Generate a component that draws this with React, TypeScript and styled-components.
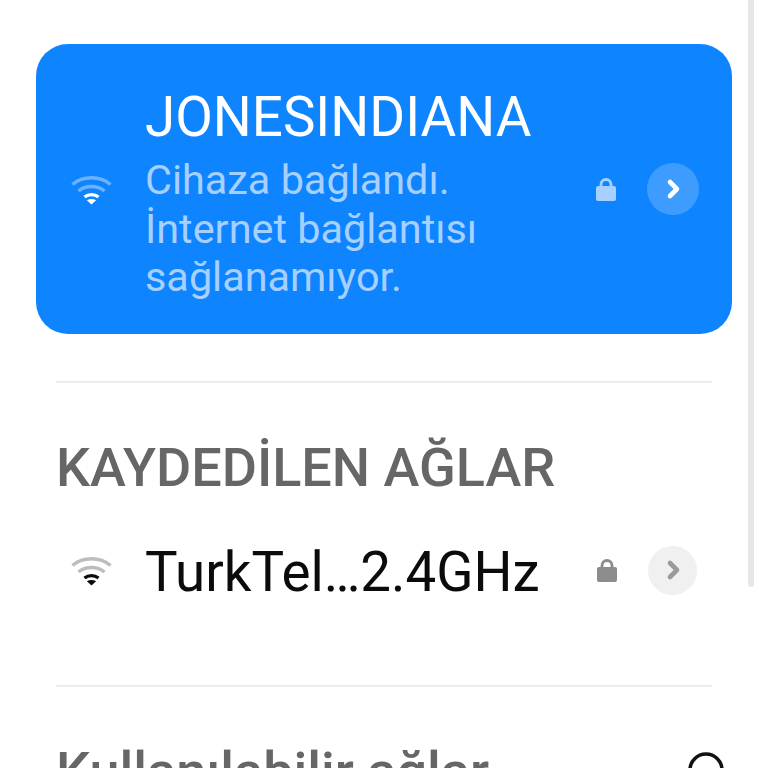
import styled, { createGlobalStyle } from "styled-components";

const GlobalStyle = createGlobalStyle`
  html, body {
    margin: 0;
    height: 768px;
    overflow: hidden;
    background-color: #ffffff;
  }
  body {
    font-family: Roboto, "Noto Sans", sans-serif;
  }
`;

const Page = styled.div`
  position: relative;
  width: 768px;
  height: 768px;
  overflow: hidden;
  box-sizing: border-box;
  padding-top: 44px;
`;
const ScrollThumb = styled.div`
  position: absolute;
  top: 0;
  left: 748px;
  width: 6px;
  height: 587px;
  background-color: #e6e6e6;
  border-radius: 0 0 3px 3px;
`;
const ActiveCard = styled.div`
  display: flex;
  align-items: center;
  height: 290px;
  margin: 0 36px;
  padding: 0 33px 0 34px;
  box-sizing: border-box;
  background-color: #0f84ff;
  border-radius: 32px;
`;
const Row = styled.div`
  display: flex;
  align-items: center;
  height: 100px;
  padding: 0 70px 0 70px;
  margin-top: 23px;
`;
const IconSlot = styled.div`
  flex: none;
  width: 42px;
  height: 32px;
  margin-right: 33px;
`;
const Texts = styled.div<{ $top: number }>`
  flex: 1;
  min-width: 0;
  padding-top: ${(p) => p.$top}px;
`;
const NetworkName = styled.div<{ $active?: boolean }>`
  font-size: 54.7px;
  line-height: 58px;
  white-space: nowrap;
  color: ${(p) => (p.$active ? "#ffffff" : "#0b0b0b")};
`;
const Status = styled.div`
  margin-top: 10px;
  font-size: 41.4px;
  line-height: 48.5px;
  color: #a5d0ff;
`;
const LockSlot = styled.div`
  flex: none;
  width: 20px;
  height: 24px;
  margin-right: 31px;
`;
const ArrowButton = styled.div<{ $active?: boolean }>`
  flex: none;
  width: ${(p) => (p.$active ? 52 : 49)}px;
  height: ${(p) => (p.$active ? 52 : 49)}px;
  margin-right: ${(p) => (p.$active ? 0 : 1)}px;
  display: flex;
  align-items: center;
  justify-content: center;
  border-radius: 50%;
  background-color: ${(p) => (p.$active ? "#3f9cff" : "#f0f0f0")};
`;
const Divider = styled.div<{ $top: number }>`
  height: 2px;
  margin: ${(p) => p.$top}px 56px 0;
  background-color: #ececec;
`;
const SectionTitle = styled.div`
  margin: 56px 0 0 56px;
  font-size: 54px;
  line-height: 58px;
  font-weight: 500;
  color: #666666;
  white-space: nowrap;
`;
const SectionRow = styled.div`
  display: flex;
  align-items: flex-start;
  justify-content: space-between;
  padding-right: 42px;
`;
const Spinner = styled.svg`
  flex: none;
  margin-top: 63px;
`;

const WifiIcon = ({ near, far }: { near: string; far: string }) => (
  <svg width="42" height="32" viewBox="0 0 42 32" fill="none">
    <path d="M2.5 11.5C13 2.5 30 2.5 40.5 11.5" stroke={far} strokeWidth="3.4" />
    <path d="M8.5 18C15.5 12 27.5 12 34.5 18" stroke={far} strokeWidth="3.4" />
    <path d="M14.5 24C18.5 20.8 24.5 20.8 28.5 24" stroke={near} strokeWidth="3.4" />
    <path d="M16.9 27.2C19.7 25.6 23.3 25.6 26.1 27.2L21.5 31.6Z" fill={near} />
  </svg>
);

const LockIcon = ({ color }: { color: string }) => (
  <svg width="20" height="24" viewBox="0 0 20 24" fill="none">
    <path d="M5 10V7.5C5 4.5 7 2.5 10 2.5C13 2.5 15 4.5 15 7.5V10" stroke={color} strokeWidth="2.8" />
    <rect x="0" y="9" width="20" height="15" rx="2" fill={color} />
  </svg>
);

const Chevron = ({ color }: { color: string }) => (
  <svg width="16" height="22" viewBox="0 0 16 22" fill="none">
    <path d="M5 4L12 11L5 18" stroke={color} strokeWidth="4.6" strokeLinecap="round" strokeLinejoin="round" />
  </svg>
);

const App = () => {
  return (
    <Page>
      <GlobalStyle />
      <ScrollThumb />
      <ActiveCard>
        <IconSlot>
          <WifiIcon near="#ffffff" far="#6db2ff" />
        </IconSlot>
        <Texts $top={12}>
          <NetworkName $active>JONESINDIANA</NetworkName>
          <Status>
            Cihaza bağlandı.
            <br />
            İnternet bağlantısı
            <br />
            sağlanamıyor.
          </Status>
        </Texts>
        <LockSlot>
          <LockIcon color="#a5d0ff" />
        </LockSlot>
        <ArrowButton $active>
          <Chevron color="#ffffff" />
        </ArrowButton>
      </ActiveCard>
      <Divider $top={47} />
      <SectionTitle>KAYDEDİLEN AĞLAR</SectionTitle>
      <Row>
        <IconSlot>
          <WifiIcon near="#0b0b0b" far="#bdbdbd" />
        </IconSlot>
        <Texts $top={4}>
          <NetworkName>TurkTel…2.4GHz</NetworkName>
        </Texts>
        <LockSlot>
          <LockIcon color="#8c8c8c" />
        </LockSlot>
        <ArrowButton>
          <Chevron color="#9a9a9a" />
        </ArrowButton>
      </Row>
      <Divider $top={65} />
      <SectionRow>
        <SectionTitle>Kullanılabilir ağlar</SectionTitle>
        <Spinner width="40" height="40" viewBox="0 0 40 40" fill="none">
          <circle cx="20" cy="20" r="16" stroke="#111111" strokeWidth="3.5" />
        </Spinner>
      </SectionRow>
    </Page>
  );
};

export default App;
